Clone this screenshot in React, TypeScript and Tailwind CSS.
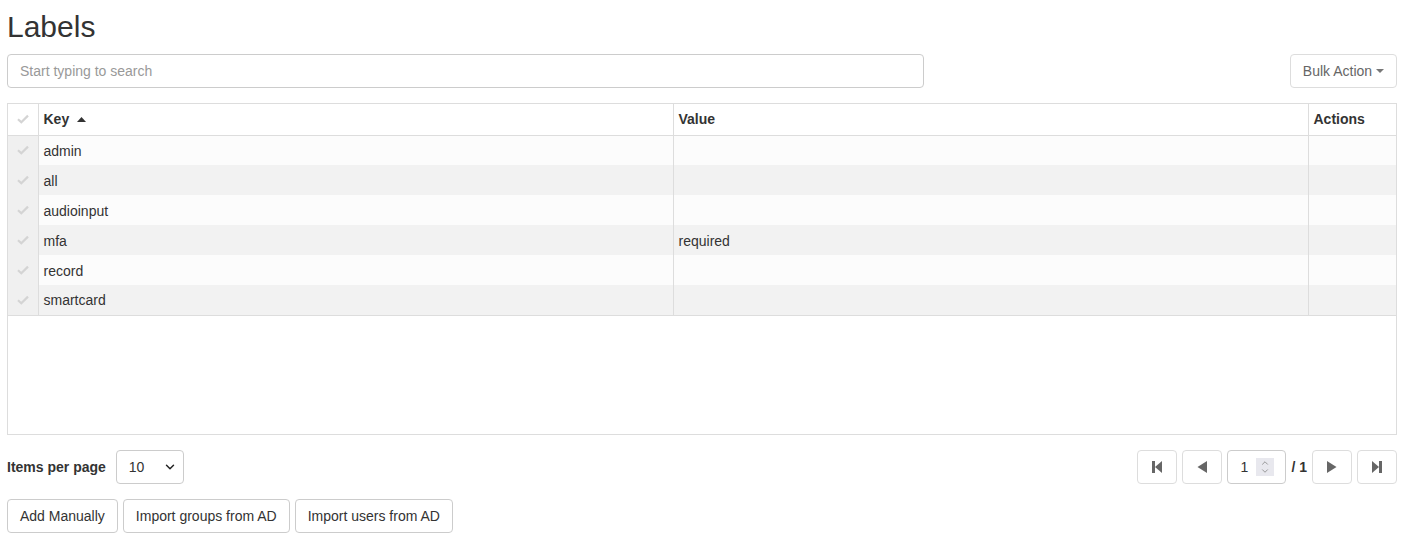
import { ChevronDown, ChevronUp } from "lucide-react";

const rows = [
  { key: "admin", value: "" },
  { key: "all", value: "" },
  { key: "audioinput", value: "" },
  { key: "mfa", value: "required" },
  { key: "record", value: "" },
  { key: "smartcard", value: "" },
];

function Tick() {
  return (
    <svg width="12" height="10" viewBox="0 0 12 10" className="mx-auto">
      <path d="M1 5.2 L4.3 8.3 L11 1.6" fill="none" stroke="#d4d4d4" strokeWidth="2.2" />
    </svg>
  );
}

function PagerButton({ kind }: { kind: "first" | "prev" | "next" | "last" }) {
  return (
    <button className="w-[40px] h-[34px] border border-[#ddd] rounded-[4px] bg-white flex items-center justify-center">
      <svg width="12" height="14" viewBox="0 0 12 14" fill="#666">
        {kind === "first" && (
          <>
            <rect x="1" y="1" width="3" height="12" />
            <path d="M4 7 L11 1 L11 13 Z" />
          </>
        )}
        {kind === "prev" && <path d="M1.5 7 L11 1 L11 13 Z" />}
        {kind === "next" && <path d="M10.5 7 L1 1 L1 13 Z" />}
        {kind === "last" && (
          <>
            <path d="M8 7 L1 1 L1 13 Z" />
            <rect x="8" y="1" width="3" height="12" />
          </>
        )}
      </svg>
    </button>
  );
}

export default function App() {
  return (
    <div
      className="pl-[7px] pr-[22px] text-[14px] text-[#333] bg-white"
      style={{ fontFamily: "'Liberation Sans', Arial, sans-serif" }}
    >
      <h1 className="text-[30px] leading-[33px] pt-[10px] pb-[11px] font-normal">Labels</h1>

      {/* search + bulk action */}
      <div className="flex items-center justify-between">
        <input
          className="w-[917px] h-[34px] border border-[#ccc] rounded-[4px] px-[12px] text-[14px] placeholder:text-[#999] outline-none"
          placeholder="Start typing to search"
        />
        <button className="h-[34px] w-[107px] border border-[#ddd] rounded-[4px] text-[#666] flex items-center justify-center gap-[4px]">
          Bulk Action
          <svg width="8" height="4" viewBox="0 0 8 4">
            <path d="M0 0 L8 0 L4 4 Z" fill="#777" />
          </svg>
        </button>
      </div>

      {/* labels table */}
      <div className="mt-[15px] h-[332px] border border-[#ddd]">
        <table className="w-full table-fixed border-collapse">
          <colgroup>
            <col className="w-[30px]" />
            <col className="w-[635px]" />
            <col className="w-[635px]" />
            <col />
          </colgroup>
          <thead>
            <tr className="h-[31px] border-b border-[#ddd] text-left font-bold">
              <th className="border-r border-[#ddd] align-middle">
                <Tick />
              </th>
              <th className="px-[5px] border-r border-[#ddd]">
                <span className="inline-flex items-center gap-[8px]">
                  Key
                  <svg width="9" height="5" viewBox="0 0 9 5">
                    <path d="M0 5 L4.5 0 L9 5 Z" fill="#333" />
                  </svg>
                </span>
              </th>
              <th className="px-[5px] border-r border-[#ddd]">Value</th>
              <th className="px-[5px]">Actions</th>
            </tr>
          </thead>
          <tbody>
            {rows.map((r, i) => (
              <tr
                key={r.key}
                className={`h-[30px] ${i % 2 === 0 ? "bg-[#fcfcfc]" : "bg-[#f2f2f2]"} ${
                  i === rows.length - 1 ? "border-b border-[#ddd]" : ""
                }`}
              >
                <td className="bg-[#f0f0f0] border-r border-[#ddd] align-middle">
                  <Tick />
                </td>
                <td className="px-[5px] pt-[2px] border-r border-[#ddd]">{r.key}</td>
                <td className="px-[5px] pt-[2px] border-r border-[#ddd]">{r.value}</td>
                <td />
              </tr>
            ))}
          </tbody>
        </table>
      </div>

      {/* paging */}
      <div className="mt-[15px] flex items-center justify-between">
        <div className="flex items-center gap-[10px]">
          <span className="font-bold">Items per page</span>
          <div className="w-[68px] h-[34px] border border-[#ccc] rounded-[4px] flex items-center justify-between pl-[12px] pr-[6px]">
            <span>10</span>
            <ChevronDown size={14} strokeWidth={2.5} className="text-[#222]" />
          </div>
        </div>
        <div className="flex items-center gap-[5px]">
          <PagerButton kind="first" />
          <PagerButton kind="prev" />
          <div className="w-[59px] h-[34px] border border-[#ccc] rounded-[4px] flex items-center justify-between pl-[12px] pr-[11px]">
            <span>1</span>
            <span className="w-[18px] h-[18px] bg-[#e8e8ee] flex flex-col items-center justify-center">
              <ChevronUp size={10} strokeWidth={2} className="text-[#888] -mb-[2px]" />
              <ChevronDown size={10} strokeWidth={2} className="text-[#888]" />
            </span>
          </div>
          <span className="font-bold whitespace-nowrap shrink-0">/ 1</span>
          <PagerButton kind="next" />
          <PagerButton kind="last" />
        </div>
      </div>

      {/* add actions */}
      <div className="mt-[15px] flex gap-[5px]">
        <button className="h-[34px] px-[12px] border border-[#ccc] rounded-[4px] bg-white">Add Manually</button>
        <button className="h-[34px] px-[12px] border border-[#ccc] rounded-[4px] bg-white">Import groups from AD</button>
        <button className="h-[34px] px-[12px] border border-[#ccc] rounded-[4px] bg-white">Import users from AD</button>
      </div>
    </div>
  );
}
